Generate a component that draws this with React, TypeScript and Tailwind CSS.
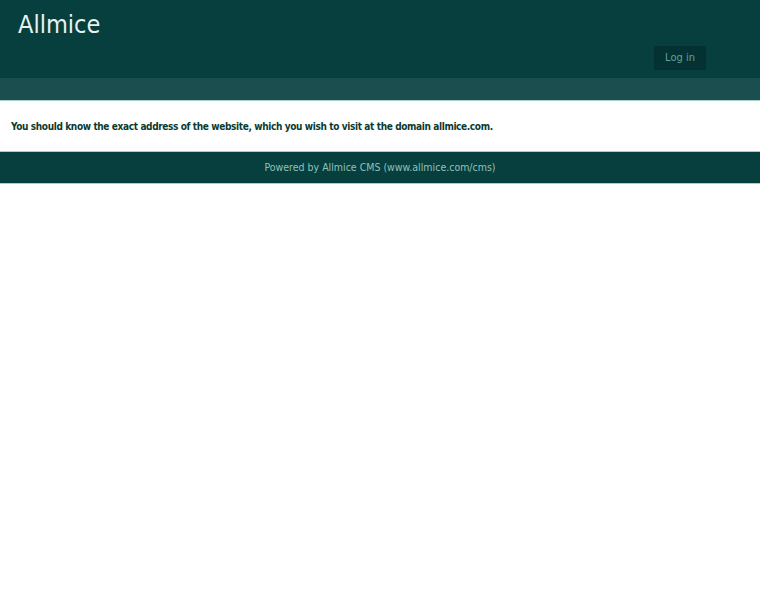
export default function App() {
  return (
    <div className="min-h-[600px] bg-white" style={{ fontFamily: '"DejaVu Sans Condensed", "DejaVu Sans", sans-serif' }}>
      <header className="bg-[#073e3e]">
        <div className="flex h-[78px] items-start justify-between pl-[18px] pr-[54px]">
          <h1 className="mt-[10px] text-[25px] font-normal leading-[30px] text-[#e6f2f0]">Allmice</h1>
          <button className="mt-[46px] h-[24px] w-[52px] bg-[#043232] text-[11px] text-[#5ea39c]">Log in</button>
        </div>
        <div className="h-[23px] border-b border-[#a4cfca] bg-[#1b4f4f]" />
      </header>

      <main className="px-[11px] pt-[20px] pb-[18px]">
        <p className="text-[10px] font-bold leading-[12px] tracking-[-0.37px] text-[#0b3a30]">
          You should know the exact address of the website, which you wish to visit at the domain allmice.com.
        </p>
      </main>

      <footer className="border-y border-[#a4cfca] bg-[#073e3e] py-[8px] text-center">
        <p className="text-[10.5px] leading-[15px] text-[#8fc2bb]">Powered by Allmice CMS (www.allmice.com/cms)</p>
      </footer>
    </div>
  )
}
